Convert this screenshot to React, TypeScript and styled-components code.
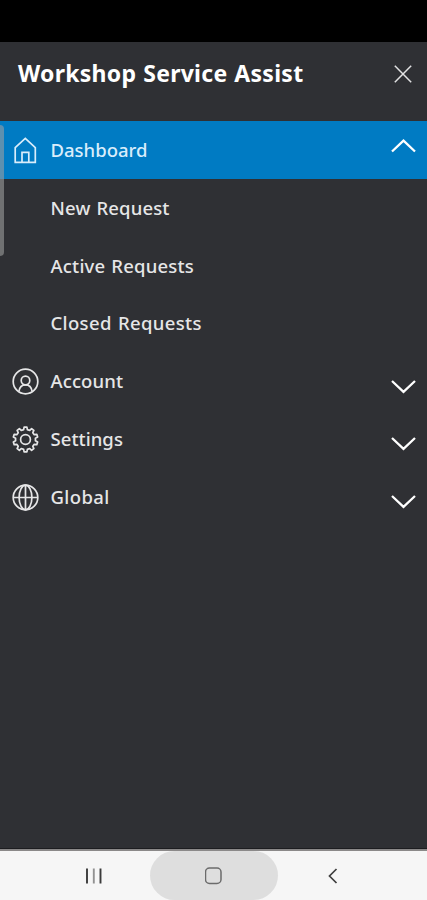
import React from "react";
import styled, { createGlobalStyle } from "styled-components";

const GlobalStyle = createGlobalStyle`
  * { box-sizing: border-box; }
  body { margin: 0; background: #2f3035; }
`;

const Screen = styled.div`
  position: relative;
  display: flex;
  flex-direction: column;
  width: 427px;
  height: 900px;
  overflow: hidden;
  background: #2f3034;
  color: #e9e9ea;
  font-family: "Noto Sans", "Open Sans", sans-serif;
`;

const StatusBar = styled.div`
  height: 42px;
  flex: none;
  background: #000;
`;

const Header = styled.header`
  display: flex;
  flex: none;
  align-items: center;
  justify-content: space-between;
  height: 79px;
  padding: 0 15px 16px 18px;
`;

const Title = styled.h1`
  margin: -2px 0 0;
  color: #fff;
  font-size: 23px;
  font-weight: 700;
  line-height: 32px;
  letter-spacing: 0.27px;
  word-spacing: 0.7px;
  white-space: nowrap;
`;

const IconButton = styled.button`
  display: flex;
  padding: 0;
  border: 0;
  background: none;
  color: #e2e2e3;
`;

const Menu = styled.nav`
  flex: 1;
`;

const Row = styled.div<{ $active?: boolean }>`
  display: grid;
  grid-template-columns: 28px 1fr 26px;
  column-gap: 10.5px;
  align-items: center;
  height: ${(p) => (p.$active ? 58.4 : 57.75)}px;
  padding: 0 11px 0 12px;
  background: ${(p) => (p.$active ? "#007bc3" : "transparent")};
  color: ${(p) => (p.$active ? "#d9edfb" : "#e6e6e7")};
`;

const Label = styled.span<{ $spacing: number }>`
  grid-column: 2;
  font-size: 18.5px;
  font-weight: 500;
  line-height: 26px;
  margin-top: -1px;
  letter-spacing: ${(p) => p.$spacing}px;
  word-spacing: 1px;
  white-space: nowrap;
`;

const Chevron = styled.svg<{ $up?: boolean }>`
  display: block;
  color: #fff;
  transform: ${(p) => (p.$up ? "translateY(-4px) scaleY(-1)" : "translateY(4.5px)")};
`;

const ScrollThumb = styled.div`
  position: absolute;
  top: 125px;
  left: -4px;
  width: 8px;
  height: 131px;
  border-radius: 4px;
  background: rgba(160, 160, 160, 0.58);
`;

const NavBar = styled.footer`
  display: grid;
  grid-template-columns: 150px 128px 1fr;
  flex: none;
  height: 51px;
  border-top: 2px solid #8b8989;
  background: #f6f6f6;
  box-shadow: 0 -1px 0 #1d1d20;
`;

const NavKey = styled.div<{ $pressed?: boolean; $inset?: number }>`
  display: flex;
  align-items: center;
  justify-content: ${(p) => (p.$pressed ? "center" : "flex-start")};
  padding-left: ${(p) => p.$inset ?? 0}px;
  border-radius: ${(p) => (p.$pressed ? "25px" : "0")};
  background: ${(p) => (p.$pressed ? "#dedede" : "transparent")};
  padding-top: 1px;
`;

const stroke = { fill: "none", stroke: "currentColor", strokeWidth: 1.7 };

const HomeIcon = () => (
  <svg width="27" height="28" viewBox="0 0 27 28" {...stroke}>
    <path d="M3.2 11.6 13.3 2.4 23.3 11.6V26.3H3.2Z" />
    <path d="M10 26V16.3h6.8V26" />
  </svg>
);

const AccountIcon = () => (
  <svg width="27" height="27" viewBox="0 0 27 27" {...stroke}>
    <circle cx="13.5" cy="13.5" r="12.3" />
    <circle cx="13.5" cy="12.5" r="4.3" />
    <path d="M6.9 23.5C7.5 19.3 10 16.9 13.5 16.9s6 2.4 6.6 6.6" />
  </svg>
);

const TEETH = 10;
const gearPath = (() => {
  const step = (Math.PI * 2) / TEETH;
  const points: string[] = [];
  for (let i = 0; i < TEETH; i++) {
    const mid = i * step - Math.PI / 2;
    const corners = [[-0.3, 10], [-0.18, 12.4], [0.18, 12.4], [0.3, 10]];
    for (const [turn, r] of corners) {
      const a = mid + turn * step;
      points.push(`${(13.5 + r * Math.cos(a)).toFixed(2)} ${(13.5 + r * Math.sin(a)).toFixed(2)}`);
    }
  }
  return `M${points.join("L")}Z`;
})();

const SettingsIcon = () => (
  <svg width="27" height="27" viewBox="0 0 27 27" {...stroke} strokeLinejoin="round">
    <path d={gearPath} />
    <circle cx="13.5" cy="13.5" r="4.9" />
  </svg>
);

const GlobeIcon = () => (
  <svg width="27" height="27" viewBox="0 0 27 27" {...stroke}>
    <circle cx="13.5" cy="13.5" r="12.3" />
    <ellipse cx="13.5" cy="13.5" rx="6.4" ry="12.3" />
    <path d="M13.5 1.2v24.6M1.2 13.5h24.6" />
  </svg>
);

const ChevronIcon = ({ up }: { up?: boolean }) => (
  <Chevron $up={up} width="26" height="16" viewBox="0 0 26 16">
    <path d="M2 2.5 13.5 13.3 25 2.5" fill="none" stroke="currentColor" strokeWidth="2.3" />
  </Chevron>
);

type Item = { label: string; spacing: number; icon?: React.ReactNode; open?: boolean };

const items: Item[] = [
  { label: "Dashboard", spacing: 0, icon: <HomeIcon />, open: true },
  { label: "New Request", spacing: 0.15 },
  { label: "Active Requests", spacing: 0.2 },
  { label: "Closed Requests", spacing: 0.35 },
  { label: "Account", spacing: 0.1, icon: <AccountIcon /> },
  { label: "Settings", spacing: 0.05, icon: <SettingsIcon /> },
  { label: "Global", spacing: 0.4, icon: <GlobeIcon /> },
];

export default function App() {
  return (
    <Screen>
      <GlobalStyle />
      <StatusBar />
      <Header>
        <Title>Workshop Service Assist</Title>
        <IconButton aria-label="Close">
          <svg width="18" height="18" viewBox="0 0 18 18">
            <path d="M.8.8 17.2 17.2M17.2.8.8 17.2" stroke="currentColor" strokeWidth="1.5" />
          </svg>
        </IconButton>
      </Header>
      <Menu>
        {items.map(({ label, spacing, icon, open }) => (
          <Row key={label} $active={open}>
            {icon}
            <Label $spacing={spacing}>{label}</Label>
            {icon && <ChevronIcon up={open} />}
          </Row>
        ))}
      </Menu>
      <ScrollThumb />
      <NavBar>
        <NavKey $inset={86}>
          <svg width="16" height="16" viewBox="0 0 16 16" strokeWidth="1.9">
            <path d="M1 .5v15M14.5.5v15" stroke="#3b3b3b" />
            <path d="M7.8.5v15" stroke="#929292" />
          </svg>
        </NavKey>
        <NavKey $pressed>
          <svg width="18" height="18" viewBox="0 0 18 18">
            <rect x=".5" y="1" width="15.5" height="15.5" rx="4" fill="none" stroke="#6b6b6b" strokeWidth="1.5" />
          </svg>
        </NavKey>
        <NavKey $inset={50}>
          <svg width="10" height="16" viewBox="0 0 10 16">
            <path d="M8.5 1 1.5 8l7 7" fill="none" stroke="#3e3e3e" strokeWidth="1.7" />
          </svg>
        </NavKey>
      </NavBar>
    </Screen>
  );
}
